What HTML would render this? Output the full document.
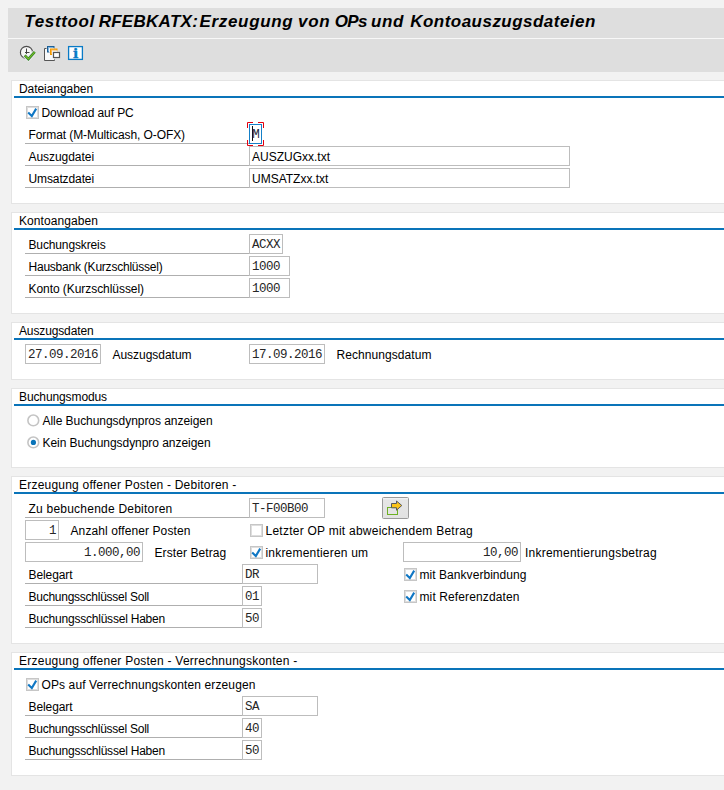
<!DOCTYPE html>
<html lang="de"><head><meta charset="utf-8"><title>Testtool RFEBKATX</title>
<style>
html,body{margin:0;padding:0;}
body{width:724px;height:790px;background:#f2f2f2;position:relative;overflow:hidden;font-family:"Liberation Sans",sans-serif;font-size:12px;color:#000;}
.abs{position:absolute;}
.titlebar{position:absolute;left:8px;top:8px;width:716px;height:30px;background:#dedede;}
.sep{position:absolute;left:8px;top:38px;width:716px;height:1px;background:#f8f8f8;}
.title{position:absolute;left:25px;top:12px;font-size:17px;font-weight:bold;font-style:italic;letter-spacing:0;white-space:nowrap;line-height:20px;color:#000;}
.toolbar{position:absolute;left:8px;top:39px;width:716px;height:33px;background:#dedede;}
.grp{position:absolute;left:11px;width:713px;background:#fff;border:1px solid #e4e4e4;border-right:none;box-sizing:border-box;}
.ghead{position:absolute;left:19px;white-space:nowrap;line-height:14px;height:14px;}
.gline{position:absolute;left:14px;width:710px;height:2px;background:#0a74b9;}
.lbl{position:absolute;white-space:nowrap;line-height:14px;height:14px;}
.ul{position:absolute;height:1px;background:#afafaf;}
.fld{position:absolute;height:20px;box-sizing:border-box;border:1px solid #bdbdbd;background:#fff;white-space:nowrap;line-height:18px;padding:0 2px;overflow:hidden;}
.mono{font-family:"Liberation Mono",monospace;font-size:12.5px;letter-spacing:-0.5px;color:#262626;line-height:20px;}
.r{text-align:right;}
.prop{line-height:20px;}
.cb{position:absolute;width:13px;height:13px;box-sizing:border-box;border:1px solid #c6c6c6;background:#fff;box-shadow:inset 0 0 0 1px #dedede;}
.cb svg{position:absolute;left:0;top:0;}
.rb{position:absolute;width:13px;height:13px;box-sizing:border-box;border:1.5px solid #bdbdbd;border-radius:50%;background:#fff;}
.rb.on::after{content:"";position:absolute;left:2.5px;top:2.5px;width:5px;height:5px;border-radius:50%;background:#0a74b9;}
</style></head><body>
<div class="titlebar"></div>
<div class="title"><span style="letter-spacing:0.65px;margin-left:-0.7px">Testtool</span> <span style="letter-spacing:0.28px;margin-left:-1.1px">RFEBKATX:</span> <span style="letter-spacing:0.66px;margin-left:-3.3px">Erzeugung</span> <span style="letter-spacing:0.8px;margin-left:-0.2px">von</span> <span style="letter-spacing:-0.6px;margin-left:-0.5px">OPs</span> <span style="letter-spacing:0.55px;margin-left:-0.7px">und</span> <span style="letter-spacing:0.47px;margin-left:1.7px">Kontoauszugsdateien</span></div>
<div class="toolbar"></div><div class="sep"></div>

<svg class="abs" style="left:18px;top:43px" width="70" height="20" viewBox="18 43 70 20">
<circle cx="26.5" cy="52.4" r="6.1" fill="#f6f6f6" stroke="#4c4c4c" stroke-width="1.15"/>
<path d="M26.5 48.5V54M25 52.5H29.5" fill="none" stroke="#444" stroke-width="1"/>
<path d="M24.7 55.4L28.4 59.1L34.8 51.9" fill="none" stroke="#ebebeb" stroke-width="4.4"/>
<path d="M24.7 55.4L28.4 59.1L34.8 51.9" fill="none" stroke="#2f7f2c" stroke-width="2.6"/>
<path d="M24.9 55.6L28.4 59.0L34.6 52.1" fill="none" stroke="#7cc021" stroke-width="1.1"/>
<path d="M46.5 48.5H44.5V60.5H54.5V59.5" fill="none" stroke="#555" stroke-width="1"/>
<path d="M45 49H47V52H50V55H53V58H54V60H45Z" fill="#f8f8f8"/>
<rect x="47.5" y="46.5" width="6.5" height="5.5" fill="#7fb2dc" stroke="#1c5f96" stroke-width="1"/>
<rect x="49" y="48" width="5.5" height="4.5" fill="#f2f2f2"/>
<rect x="50.5" y="49" width="6.5" height="5.5" fill="#ffb74a" stroke="#f39a00" stroke-width="1"/>
<rect x="52" y="50.5" width="5.5" height="4.5" fill="#f2f2f2"/>
<rect x="53.5" y="52.5" width="6" height="5" fill="#fff" stroke="#555" stroke-width="1.2"/>
<rect x="68.6" y="46.6" width="13.8" height="12.8" fill="#fff" stroke="#0a7bc6" stroke-width="1.3"/>
<text transform="translate(75.6 58) scale(1.12 1)" x="0" y="0" text-anchor="middle" font-family="DejaVu Serif, Liberation Serif, serif" font-weight="bold" font-size="12.5" fill="#0a7bc6" stroke="#0a7bc6" stroke-width="0.3">i</text>
</svg>

<div class="grp" style="top:80px;height:124px"></div>
<div class="ghead" style="top:82px;letter-spacing:-0.061px">Dateiangaben</div>
<div class="gline" style="top:96px"></div>
<div class="cb" style="left:26px;top:106px"><svg width="11" height="11" viewBox="0 0 11 11"><path d="M1.2 5.6L4.8 9.0L9.2 1.6" fill="none" stroke="#1077c4" stroke-width="2.1"/></svg></div>
<div class="lbl" style="left:41.5px;top:106px;letter-spacing:-0.079px">Download auf PC</div>
<div class="lbl" style="left:28.5px;top:128px;letter-spacing:-0.08px">Format (M-Multicash, O-OFX)</div>
<div class="ul" style="left:25px;top:143px;width:224px"></div>
<svg class="abs" style="left:246px;top:121px" width="20" height="27" viewBox="246 121 20 27">
<rect x="249.5" y="124.5" width="12" height="19" fill="#fff" stroke="#1580c8" stroke-width="1"/>
<path d="M247.5 128V122.5H253 M258 122.5H263.5V128 M263.5 140V145.5H258 M253 145.5H247.5V140" fill="none" stroke="#e3000f" stroke-width="1"/>
<path d="M252.5 126V141" stroke="#111" stroke-width="1"/>
</svg>
<div class="lbl mono" style="left:252.2px;top:124.5px;height:20px;color:#1c2740">M</div>
<div class="lbl" style="left:28.5px;top:150px;letter-spacing:-0.05px">Auszugdatei</div>
<div class="ul" style="left:25px;top:165px;width:224px"></div>
<div class="fld prop" style="left:249px;top:146px;width:321px">AUSZUGxx.txt</div>
<div class="lbl" style="left:28.5px;top:172px;letter-spacing:-0.109px">Umsatzdatei</div>
<div class="ul" style="left:25px;top:187px;width:224px"></div>
<div class="fld prop" style="left:249px;top:168px;width:321px">UMSATZxx.txt</div>
<div class="grp" style="top:212px;height:102px"></div>
<div class="ghead" style="top:214px;letter-spacing:0.077px">Kontoangaben</div>
<div class="gline" style="top:228px"></div>
<div class="lbl" style="left:28.5px;top:238px;letter-spacing:-0.132px">Buchungskreis</div>
<div class="ul" style="left:25px;top:253px;width:224px"></div>
<div class="fld mono" style="left:249px;top:234px;width:34px">ACXX</div>
<div class="lbl" style="left:28.5px;top:260px;letter-spacing:-0.225px">Hausbank (Kurzschlüssel)</div>
<div class="ul" style="left:25px;top:275px;width:224px"></div>
<div class="fld mono" style="left:249px;top:256px;width:41px">1000</div>
<div class="lbl" style="left:28.5px;top:282px;letter-spacing:-0.058px">Konto (Kurzschlüssel)</div>
<div class="ul" style="left:25px;top:297px;width:224px"></div>
<div class="fld mono" style="left:249px;top:278px;width:41px">1000</div>
<div class="grp" style="top:322px;height:58px"></div>
<div class="ghead" style="top:324px;letter-spacing:-0.13px">Auszugsdaten</div>
<div class="gline" style="top:338px"></div>
<div class="fld mono" style="left:25px;top:344px;width:76px">27.09.2016</div>
<div class="lbl" style="left:112.5px;top:348px;letter-spacing:-0.033px">Auszugsdatum</div>
<div class="fld mono" style="left:249px;top:344px;width:76px">17.09.2016</div>
<div class="lbl" style="left:336.5px;top:348px;letter-spacing:0.074px">Rechnungsdatum</div>
<div class="grp" style="top:388px;height:80px"></div>
<div class="ghead" style="top:390px;letter-spacing:-0.107px">Buchungsmodus</div>
<div class="gline" style="top:404px"></div>
<svg class="abs" style="left:27px;top:414px" width="13" height="13" viewBox="0 0 13 13"><circle cx="6.3" cy="6.4" r="5.4" fill="#fff" stroke="#c4c4c4" stroke-width="1.6"/></svg>
<div class="lbl" style="left:42.5px;top:414px;letter-spacing:-0.05px">Alle Buchungsdynpros anzeigen</div>
<svg class="abs" style="left:27px;top:436px" width="13" height="13" viewBox="0 0 13 13"><circle cx="6.3" cy="6.4" r="5.4" fill="#fff" stroke="#c4c4c4" stroke-width="1.6"/><circle cx="6.4" cy="6.4" r="2.6" fill="#0a74b9"/></svg>
<div class="lbl" style="left:42.5px;top:436px;letter-spacing:-0.052px">Kein Buchungsdynpro anzeigen</div>
<div class="grp" style="top:476px;height:168px"></div>
<div class="ghead" style="top:478px;letter-spacing:0.217px">Erzeugung offener Posten - Debitoren -</div>
<div class="gline" style="top:492px"></div>
<div class="lbl" style="left:28.5px;top:502px;letter-spacing:0.227px">Zu bebuchende Debitoren</div>
<div class="ul" style="left:25px;top:517px;width:224px"></div>
<div class="fld mono" style="left:249px;top:498px;width:76px">T-F00B00</div>
<div class="abs" style="left:382px;top:497px;width:27px;height:22px;box-sizing:border-box;border:1px solid #9a9a9a;border-radius:1.5px;background:linear-gradient(#f6f6f6 0,#e6e6e6 2px,#e2e2e2 100%)"></div>
<svg class="abs" style="left:384px;top:499px" width="22" height="18" viewBox="384 499 22 18">
<rect x="387.5" y="507.5" width="10" height="7" fill="#e4e4e4" stroke="#6db024" stroke-width="1"/>
<path d="M391.5 503.5H396.5V501L401.8 505.5L396.5 510.2V507.8H391.5Z" fill="#fcc419" stroke="#55585f" stroke-width="1" stroke-linejoin="miter"/>
</svg>
<div class="fld mono r" style="left:25px;top:520px;width:34px">1</div>
<div class="lbl" style="left:70.5px;top:524px;letter-spacing:0.101px">Anzahl offener Posten</div>
<div class="cb" style="left:250px;top:524px"></div>
<div class="lbl" style="left:265.5px;top:524px;letter-spacing:0.244px">Letzter OP mit abweichendem Betrag</div>
<div class="fld mono r" style="left:25px;top:542px;width:118px">1.000,00</div>
<div class="lbl" style="left:154.5px;top:546px;letter-spacing:0.084px">Erster Betrag</div>
<div class="cb" style="left:250px;top:546px"><svg width="11" height="11" viewBox="0 0 11 11"><path d="M1.2 5.6L4.8 9.0L9.2 1.6" fill="none" stroke="#1077c4" stroke-width="2.1"/></svg></div>
<div class="lbl" style="left:265.5px;top:546px;letter-spacing:0.196px">inkrementieren um</div>
<div class="fld mono r" style="left:403px;top:542px;width:118px">10,00</div>
<div class="lbl" style="left:525px;top:546px;letter-spacing:0.23px">Inkrementierungsbetrag</div>
<div class="lbl" style="left:28.5px;top:568px;letter-spacing:-0.088px">Belegart</div>
<div class="ul" style="left:25px;top:583px;width:217px"></div>
<div class="fld mono" style="left:242px;top:564px;width:76px">DR</div>
<div class="cb" style="left:404px;top:568px"><svg width="11" height="11" viewBox="0 0 11 11"><path d="M1.2 5.6L4.8 9.0L9.2 1.6" fill="none" stroke="#1077c4" stroke-width="2.1"/></svg></div>
<div class="lbl" style="left:419.5px;top:568px;letter-spacing:0.052px">mit Bankverbindung</div>
<div class="lbl" style="left:28.5px;top:590px;letter-spacing:-0.254px">Buchungsschlüssel Soll</div>
<div class="ul" style="left:25px;top:605px;width:217px"></div>
<div class="fld mono" style="left:242px;top:586px;width:20px">01</div>
<div class="cb" style="left:404px;top:590px"><svg width="11" height="11" viewBox="0 0 11 11"><path d="M1.2 5.6L4.8 9.0L9.2 1.6" fill="none" stroke="#1077c4" stroke-width="2.1"/></svg></div>
<div class="lbl" style="left:419.5px;top:590px;letter-spacing:0.114px">mit Referenzdaten</div>
<div class="lbl" style="left:28.5px;top:612px;letter-spacing:-0.214px">Buchungsschlüssel Haben</div>
<div class="ul" style="left:25px;top:627px;width:217px"></div>
<div class="fld mono" style="left:242px;top:608px;width:20px">50</div>
<div class="grp" style="top:652px;height:124px"></div>
<div class="ghead" style="top:654px;letter-spacing:0.238px">Erzeugung offener Posten - Verrechnungskonten -</div>
<div class="gline" style="top:668px"></div>
<div class="cb" style="left:26px;top:678px"><svg width="11" height="11" viewBox="0 0 11 11"><path d="M1.2 5.6L4.8 9.0L9.2 1.6" fill="none" stroke="#1077c4" stroke-width="2.1"/></svg></div>
<div class="lbl" style="left:41.5px;top:678px;letter-spacing:0.11px">OPs auf Verrechnungskonten erzeugen</div>
<div class="lbl" style="left:28.5px;top:700px;letter-spacing:-0.088px">Belegart</div>
<div class="ul" style="left:25px;top:715px;width:217px"></div>
<div class="fld mono" style="left:242px;top:696px;width:76px">SA</div>
<div class="lbl" style="left:28.5px;top:722px;letter-spacing:-0.254px">Buchungsschlüssel Soll</div>
<div class="ul" style="left:25px;top:737px;width:217px"></div>
<div class="fld mono" style="left:242px;top:718px;width:20px">40</div>
<div class="lbl" style="left:28.5px;top:744px;letter-spacing:-0.214px">Buchungsschlüssel Haben</div>
<div class="ul" style="left:25px;top:759px;width:217px"></div>
<div class="fld mono" style="left:242px;top:740px;width:20px">50</div>
</body></html>
